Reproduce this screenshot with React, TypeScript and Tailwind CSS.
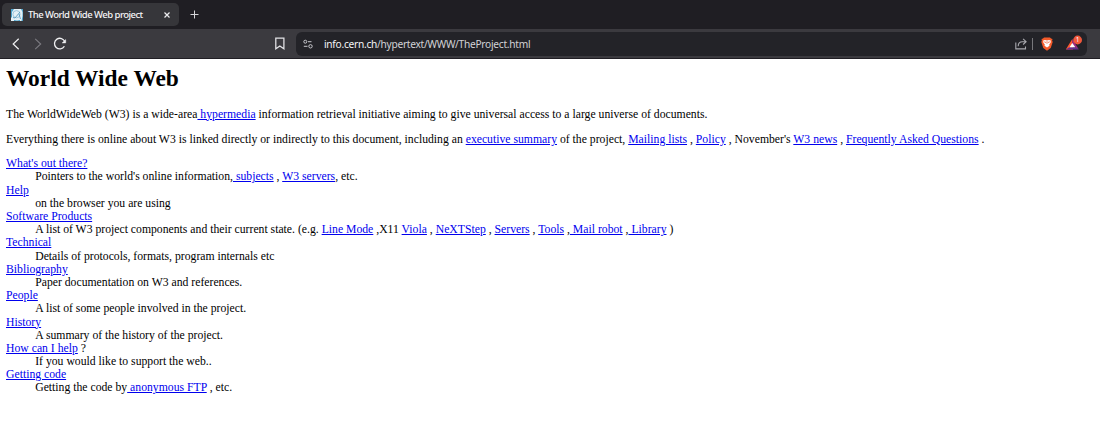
import type { ReactNode } from "react";

function A({ children }: { children: ReactNode }) {
  return (
    <a href="#" className="text-[#0000ee] underline">
      {children}
    </a>
  );
}

function TabBar() {
  return (
    <div className="flex h-[29px] items-start bg-[#1f1e23] pt-[3px] pl-[2px]">
      <div className="flex h-[23px] w-[177px] items-center rounded-[5px] bg-[#36363a] pl-[9px]">
        <svg className="h-3 w-3 shrink-0" viewBox="0 0 12 12">
          <rect width="12" height="12" fill="#e4f0f6" />
          <path d="M0 0h3L1 3v5l-1 1zM10 0h2v12h-1.5l1-5V3zM3 11l3 .4 3-.4v1H3z" fill="#4aa0c9" />
          <circle cx="5.5" cy="5.2" r="3.6" fill="none" stroke="#8cbdd6" strokeWidth=".8" />
          <path d="M2 8.5 4 9l5-6M8 5l1.5 5" stroke="#4a93bb" strokeWidth=".8" fill="none" />
        </svg>
        <span className="ml-[5px] w-[130px] text-[9.5px] leading-none font-medium tracking-[-0.53px] whitespace-nowrap text-[#f5f5f7]">The World Wide Web project</span>
        <svg className="ml-[5px] h-2 w-2" viewBox="0 0 8 8" stroke="#eeeef0" strokeWidth="1.2">
          <path d="m1.5 1.5 5 5m0-5-5 5" />
        </svg>
      </div>
      <svg className="mt-[7px] ml-[11px] h-[9px] w-[9px]" viewBox="0 0 9 9" stroke="#d5d5d8" strokeWidth="1">
        <path d="M4.5.5v8M.5 4.5h8" />
      </svg>
    </div>
  );
}

function Toolbar() {
  return (
    <div className="flex h-[30px] items-center border-b border-[#201e24] bg-[#3b3a3f]">
      <svg className="ml-3 h-3 w-2 shrink-0" viewBox="0 0 8 12" fill="none" stroke="#f0f0f2" strokeWidth="1.2">
        <path d="M6.7.8 1.2 6l5.5 5.2" />
      </svg>
      <svg className="ml-[14px] h-3 w-2 shrink-0" viewBox="0 0 8 12" fill="none" stroke="#7c7b81" strokeWidth="1.1">
        <path d="m1.2.8 5.5 5.2-5.5 5.2" />
      </svg>
      <svg className="ml-[11px] h-[13px] w-[14px] shrink-0" viewBox="0 0 14 13" fill="none" stroke="#f0f0f2" strokeWidth="1.3">
        <path d="M11.4 9.2A5.3 5.3 0 1 1 11.8 4.8" />
        <path d="M12.7 2.6v3.3H9.2z" fill="#f0f0f2" strokeWidth=".5" />
      </svg>
      <svg className="ml-[208px] h-[13px] w-[10px] shrink-0" viewBox="0 0 10 13" fill="none" stroke="#e4e4e7" strokeWidth="1.25">
        <path d="M.8 1h8.1v10.8L4.85 8.9.8 11.8z" />
      </svg>
      <div className="ml-[11px] flex h-[24px] w-[791px] items-center rounded-[6px] bg-[#232328] pl-[7px]">
        <svg className="h-[10px] w-[10px] shrink-0" viewBox="0 0 10 10" fill="none" stroke="#c7c7cc" strokeWidth="1">
          <circle cx="2.3" cy="2.7" r="1.5" />
          <path d="M5 2.7h3.5M.8 7.3h3.7" />
          <circle cx="7.5" cy="7.3" r="1.7" />
        </svg>
        <div className="ml-[11px] w-[680px] pt-px text-[10.2px] leading-none tracking-[-0.28px] text-[#d2d2d6]">
          <span className="text-[#f4f4f6]">info.cern.ch</span>/hypertext/WWW/TheProject.html
        </div>
        <svg className="ml-[11px] h-3 w-3 shrink-0" viewBox="0 0 12 12" fill="none" stroke="#a9a9ae" strokeWidth="1.1">
          <path d="M.8 4.5v6.4h9.7V8.5" />
          <path d="M3.2 8.2c0-3 1.5-4.5 4.2-4.5h3.4M8.1.9l3 2.8-3 2.8" />
        </svg>
        <div className="ml-[5px] h-3 w-px bg-[#77777b]" />
        <svg className="ml-[8px] h-[14px] w-3 shrink-0" viewBox="0 0 12 14">
          <path d="m3 .5-1 1-1.5.5.4 1.5L.3 5l2 6L6 13.7 9.7 11l2-6-.6-1.5.4-1.5L10 1.5l-1-1z" fill="#f45b2a" />
          <path d="m2.2 3.6 1.8-.5 2 .5 2-.5 1.8.5-.2 2.2-1.4 1.8.3 1.1L6 10.6 3.5 8.7l.3-1.1-1.4-1.8z" fill="#fff" />
          <path d="m3.2 4.8 1.8.7M8.8 4.8l-1.8.7M6 4.2v2.6" stroke="#f45b2a" strokeWidth=".8" />
        </svg>
        <svg className="ml-[12px] h-[17px] w-[18px] shrink-0" viewBox="0 0 18 17">
          <path d="M7.3 4 .8 14.5H8z" fill="#ff5930" />
          <path d="M7.3 4v6l3.2 2.5 3.3 2z" fill="#a22a83" />
          <path d="M.8 14.5 4.4 12.3h6.2l3.2 2.2z" fill="#643191" />
          <path d="m7.3 8-2.8 4.3h5.8z" fill="#fff" />
          <circle cx="12.6" cy="5" r="4.4" fill="#f1573b" />
          <text x="12.6" y="7.3" textAnchor="middle" fontSize="6.5" fill="#fff">1</text>
        </svg>
      </div>
    </div>
  );
}

const entries: { term: ReactNode; detail: ReactNode }[] = [
  {
    term: <A>What's out there?</A>,
    detail: <>Pointers to the world's online information,<A> subjects</A> , <A>W3 servers</A>, etc.</>,
  },
  { term: <A>Help</A>, detail: "on the browser you are using" },
  {
    term: <A>Software Products</A>,
    detail: (
      <>
        A list of W3 project components and their current state. (e.g. <A>Line Mode</A> ,X11 <A>Viola</A> , <A>NeXTStep</A> , <A>Servers</A> , <A>Tools</A> ,<A> Mail robot</A> ,<A> Library</A> )
      </>
    ),
  },
  { term: <A>Technical</A>, detail: "Details of protocols, formats, program internals etc" },
  { term: <A>Bibliography</A>, detail: "Paper documentation on W3 and references." },
  { term: <A>People</A>, detail: "A list of some people involved in the project." },
  { term: <A>History</A>, detail: "A summary of the history of the project." },
  { term: <><A>How can I help</A> ?</>, detail: "If you would like to support the web.." },
  { term: <A>Getting code</A>, detail: <>Getting the code by<A> anonymous FTP</A> , etc.</> },
];

export default function App() {
  return (
    <div className="flex h-[435px] w-[1100px] flex-col overflow-hidden bg-white font-['Noto_Sans',sans-serif]">
      <TabBar />
      <Toolbar />
      <main className="px-[6px] pt-[6px] font-['Liberation_Serif',serif] text-[11.71px] leading-[13.18px] whitespace-nowrap text-black">
        <h1 className="text-[23.4px] leading-[27px] font-bold">World Wide Web</h1>
        <p className="mt-[15.5px]">
          The WorldWideWeb (W3) is a wide-area<A> hypermedia</A> information retrieval initiative aiming to give universal access to a large universe of documents.
        </p>
        <p className="mt-[12.2px]">
          Everything there is online about W3 is linked directly or indirectly to this document, including an <A>executive summary</A> of the project, <A>Mailing lists</A> , <A>Policy</A> , November's <A>W3 news</A> , <A>Frequently Asked Questions</A> .
        </p>
        <dl className="mt-[11.2px]">
          {entries.map((entry, i) => (
            <div key={i}>
              <dt>{entry.term}</dt>
              <dd className="ml-[29.2px]">{entry.detail}</dd>
            </div>
          ))}
        </dl>
      </main>
    </div>
  );
}
